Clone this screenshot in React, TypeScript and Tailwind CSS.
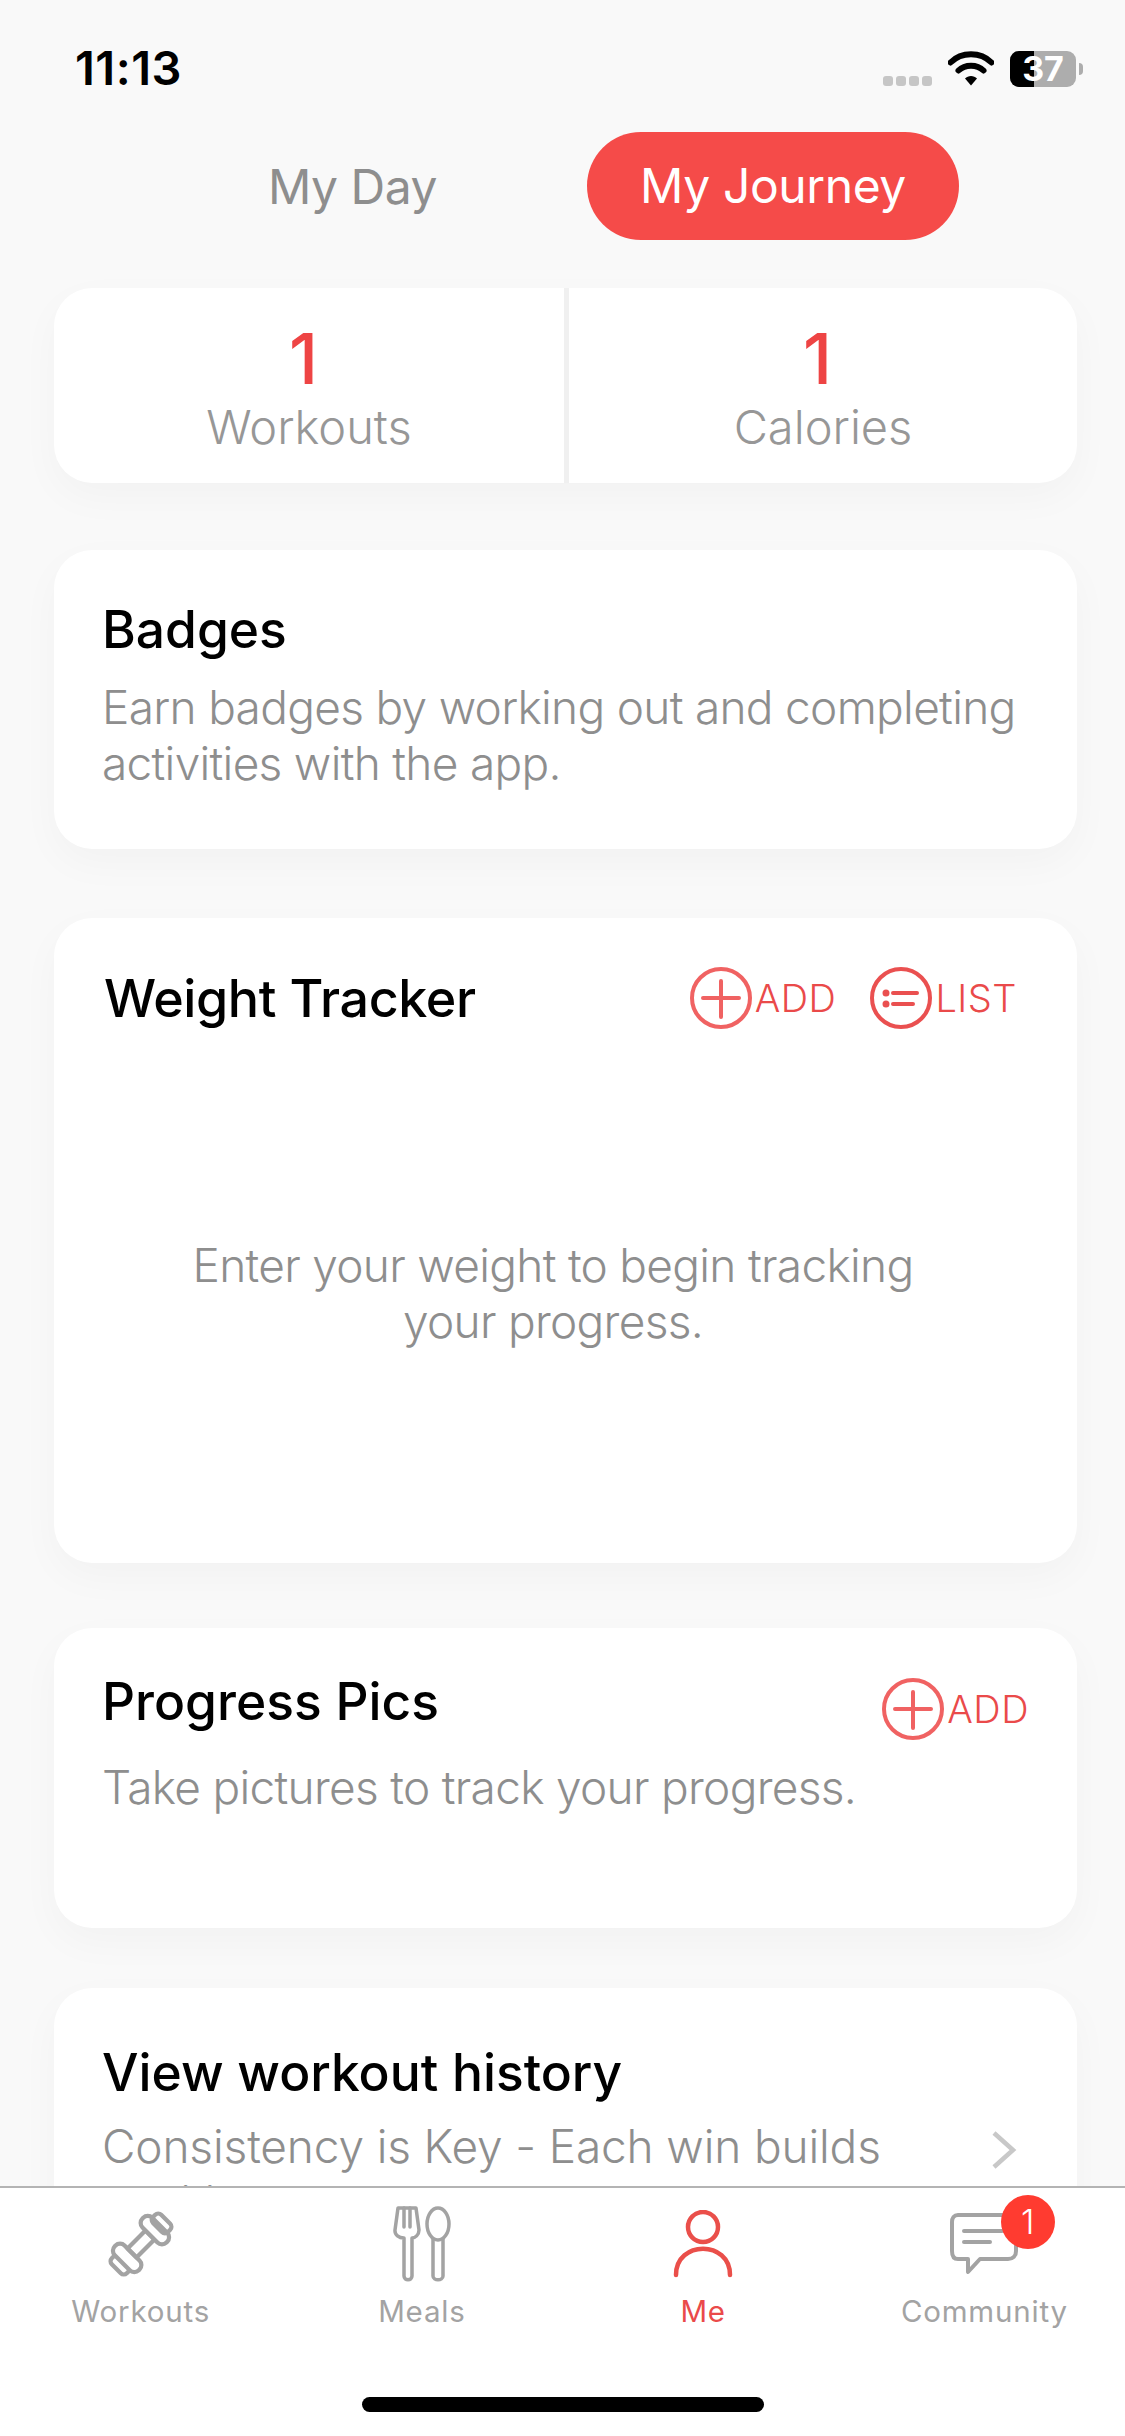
const font = "font-['Inter','Liberation_Sans',sans-serif]";
const bodyText = "text-[46px] leading-[56px] tracking-[-0.7px] text-[#8e8e8e] font-light";
const titleText = "text-[51.5px] leading-[60px] font-medium text-black";

function Wifi() {
  return (
    <svg width="46" height="36" viewBox="0 0 46 36" className="text-black">
      <path d="M2.5 11.5C13.5 0.5 32.5 0.5 43.5 11.5" fill="none" stroke="currentColor" strokeWidth="6" strokeLinecap="round" />
      <path d="M10.5 19.5C17 13 29 13 35.5 19.5" fill="none" stroke="currentColor" strokeWidth="6" strokeLinecap="round" />
      <path d="M17 27.5C20 24 26 24 29 27.5L23 34.5Z" fill="currentColor" />
    </svg>
  );
}

function Battery() {
  return (
    <div className="flex items-center gap-[3px]">
      <div className="relative w-[66px] h-[36px] rounded-[9px] bg-[#adadad]">
        <div className="w-[24px] h-full bg-black rounded-l-[9px]" />
        <span className="absolute inset-0 flex items-center justify-center text-white text-[34px] font-bold leading-none">37</span>
      </div>
      <div className="w-[4px] h-[12px] bg-[#adadad] rounded-r-full" />
    </div>
  );
}

function PlusCircle() {
  return (
    <svg width="62" height="62" viewBox="0 0 62 62" fill="none" stroke="#f06262" strokeWidth="4" strokeLinecap="round">
      <circle cx="31" cy="31" r="29" />
      <path d="M31 14V50M13 31H49" />
    </svg>
  );
}

function ListCircle() {
  return (
    <svg width="62" height="62" viewBox="0 0 62 62" fill="none" stroke="#ea5050" strokeWidth="4" strokeLinecap="round">
      <circle cx="31" cy="31" r="29" />
      <path d="M23 26H47M23 37H43" />
      <circle cx="16" cy="26" r="1.5" fill="#ea5050" />
      <circle cx="16" cy="37" r="1.5" fill="#ea5050" />
    </svg>
  );
}

function ActionButton({ kind, label }: { kind: "add" | "list"; label: string }) {
  return (
    <div className="flex items-center gap-[3px]">
      {kind === "add" ? <PlusCircle /> : <ListCircle />}
      <span className="text-[38px] leading-none font-light text-[#ea4a4a] tracking-[0.5px]">{label}</span>
    </div>
  );
}

function Dumbbell() {
  return (
    <svg width="72" height="72" viewBox="0 0 68 68" fill="none" stroke="#a3a3a3" strokeWidth="4" strokeLinejoin="round" className="overflow-visible">
      <g transform="rotate(-45 34 34)">
        <rect x="1" y="24" width="11" height="20" rx="4" />
        <rect x="9" y="18" width="13" height="32" rx="6" fill="#ffffff" />
        <rect x="22" y="28" width="24" height="12" />
        <rect x="46" y="18" width="13" height="32" rx="6" fill="#ffffff" />
        <rect x="56" y="24" width="11" height="20" rx="4" />
      </g>
    </svg>
  );
}

function Cutlery() {
  return (
    <svg width="58" height="76" viewBox="0 0 58 76" fill="none" stroke="#a3a3a3" strokeWidth="3.5" strokeLinejoin="round" strokeLinecap="round">
      <path d="M5 2H23L26 24C26 29 22 32 19 32V70C19 75 11 75 11 70V32C6 32 1.5 29 2 24Z" />
      <path d="M11 2V21M17 2V21" />
      <ellipse cx="45" cy="18" rx="11" ry="16" />
      <path d="M40 33V70C40 75 50 75 50 70V33" />
    </svg>
  );
}

function Person() {
  return (
    <svg width="60" height="68" viewBox="0 0 60 68" fill="none" stroke="#ea4f4a" strokeWidth="4.5" strokeLinecap="round">
      <circle cx="30" cy="17" r="15" />
      <path d="M3 65C3 30 57 30 57 65" />
    </svg>
  );
}

function Bubble() {
  return (
    <svg width="68" height="62" viewBox="0 0 68 62" fill="none" stroke="#a3a3a3" strokeWidth="4" strokeLinejoin="round" strokeLinecap="round">
      <path d="M8 2H58C63 2 66 5 66 9V38C66 43 63 46 58 46H30L18 59V46H8C4 46 2 43 2 38V9C2 5 4 2 8 2Z" />
      <path d="M14 18H52M14 29H40" />
    </svg>
  );
}

function TabItem({ label, active, children, badge }: { label: string; active?: boolean; children: React.ReactNode; badge?: boolean }) {
  return (
    <div className="relative flex flex-col items-center">
      <div className="h-[77px] mb-[11px] flex items-center justify-center">{children}</div>
      <span className={`text-[29.5px] leading-[36px] tracking-[0.8px] ${active ? "text-[#ea4a4a]" : "text-[#a3a3a3]"}`}>{label}</span>
      {badge && (
        <span className="absolute top-[-10px] left-[157px] w-[54px] h-[54px] rounded-full bg-[#ff3b30] text-white text-[34px] font-light flex items-center justify-center leading-none">1</span>
      )}
    </div>
  );
}

const cardShadow = "shadow-[0_14px_40px_rgba(0,0,0,0.03)]";

export default function App() {
  return (
    <div className={`${font} relative w-[1125px] h-[2436px] bg-[#f9f9f9] overflow-hidden flex flex-col`}>
      <div className="h-[132px] shrink-0 flex justify-between pl-[75px] pr-[42px] pt-[43px]">
        <span className="text-[47px] leading-[50px] font-semibold text-black tracking-[0.5px]">11:13</span>
        <div className="flex items-start gap-[16px] pt-[8px]">
          <div className="flex gap-[3px] mt-[25px]">
            <span className="w-[10px] h-[10px] rounded-[3px] bg-[#c6c6c6]" />
            <span className="w-[10px] h-[10px] rounded-[3px] bg-[#c6c6c6]" />
            <span className="w-[10px] h-[10px] rounded-[3px] bg-[#c6c6c6]" />
            <span className="w-[10px] h-[10px] rounded-[3px] bg-[#c6c6c6]" />
          </div>
          <Wifi />
          <Battery />
        </div>
      </div>

      <div className="shrink-0 h-[108px] flex items-center pl-[268px]">
        <span className="text-[48px] text-[#8e8e8e] tracking-[-0.5px] mt-[2px]">My Day</span>
        <span className="ml-[150px] w-[372px] h-[108px] rounded-full bg-[#f54b49] text-white text-[48px] tracking-[-0.4px] flex items-center justify-center">My Journey</span>
      </div>

      <div className="flex-1 min-h-0 overflow-hidden pl-[54px] pr-[48px] pt-[48px] flex flex-col gap-[67px]">
        <div className={`shrink-0 h-[195px] rounded-[38px] bg-white ${cardShadow} flex overflow-hidden`}>
          <div className="w-[510px] flex flex-col items-center pt-[33px]">
            <span className="text-[70px] leading-[76px] font-medium text-[#ee4444] mr-[11px]">1</span>
            <span className="text-[47px] leading-[60px] text-[#979797] font-light">Workouts</span>
          </div>
          <div className="w-[5px] bg-[#f0f0f0]" />
          <div className="flex-1 flex flex-col items-center pt-[33px]">
            <span className="text-[70px] leading-[76px] font-medium text-[#ee4444] mr-[11px]">1</span>
            <span className="text-[47px] leading-[60px] text-[#979797] font-light">Calories</span>
          </div>
        </div>

        <div className={`shrink-0 h-[299px] rounded-[38px] bg-white ${cardShadow} pl-[48px] pr-[30px] pt-[49px]`}>
          <div className={titleText}>Badges</div>
          <div className={`mt-[20px] ${bodyText}`}>
            Earn badges by working out and completing activities with the app.
          </div>
        </div>

        <div className={`shrink-0 h-[645px] rounded-[38px] bg-white ${cardShadow} pl-[50px] pr-[60px] pt-[48px] flex flex-col mt-[2px]`}>
          <div className="flex items-center justify-between h-[62px]">
            <span className="text-[52px] font-medium tracking-[-0.4px] text-black mt-[3px]">Weight Tracker</span>
            <div className="flex items-center gap-[34px] mt-[1px]">
              <ActionButton kind="add" label="ADD" />
              <ActionButton kind="list" label="LIST" />
            </div>
          </div>
          <div className={`mt-[209px] text-center ${bodyText} pl-[60px] pr-[75px]`}>
            Enter your weight to begin tracking your progress.
          </div>
        </div>

        <div className={`shrink-0 h-[300px] rounded-[38px] bg-white ${cardShadow} pl-[48px] pr-[50px] pt-[43px] relative -mt-[2px]`}>
          <div className={titleText}>Progress Pics</div>
          <div className={`mt-[28px] ${bodyText}`}>Take pictures to track your progress.</div>
          <div className="absolute right-[48px] top-[50px]">
            <ActionButton kind="add" label="ADD" />
          </div>
        </div>

        <div className={`shrink-0 h-[320px] -mt-[7px] rounded-[38px] bg-white ${cardShadow} pl-[48px] pr-[60px] pt-[54px] flex flex-col`}>
          <div className={titleText}>View workout history</div>
          <div className="mt-[16px] flex justify-between">
            <div className="w-[860px] text-[46px] leading-[56px] tracking-[-0.15px] text-[#8e8e8e] font-light">
              Consistency is Key - Each win builds positive
            </div>
            <svg width="26" height="40" viewBox="0 0 26 40" fill="none" stroke="#c8c8c8" strokeWidth="4.5" className="mt-[12px]">
              <path d="M3 3L22 20L3 37" />
            </svg>
          </div>
        </div>
      </div>

      <div className="shrink-0 h-[250px] bg-white border-t-2 border-[#b4b4b4] relative">
        <div className="grid grid-cols-4 pt-[17px]">
          <TabItem label="Workouts"><Dumbbell /></TabItem>
          <TabItem label="Meals"><Cutlery /></TabItem>
          <TabItem label="Me" active><Person /></TabItem>
          <TabItem label="Community" badge><Bubble /></TabItem>
        </div>
        <div className="absolute left-[362px] bottom-[24px] w-[402px] h-[15px] rounded-full bg-black" />
      </div>
    </div>
  );
}
